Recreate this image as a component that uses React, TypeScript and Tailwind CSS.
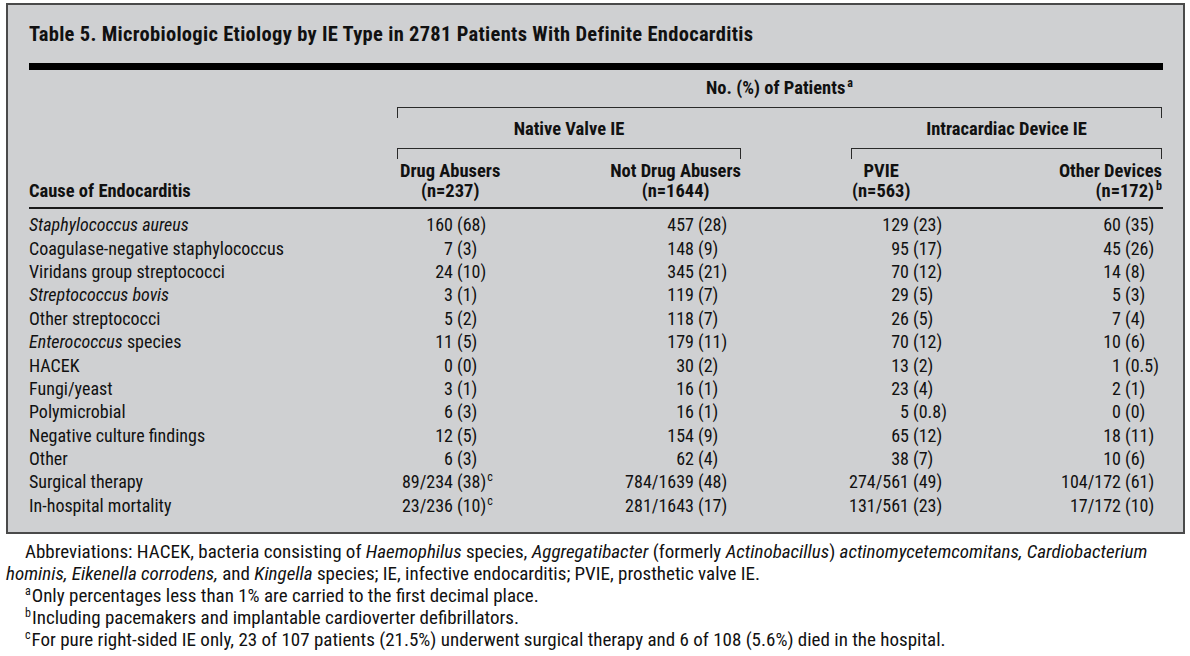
import type { ReactNode } from "react";

type Row = {
  label: ReactNode;
  cells: string[];
  sup?: boolean;
};

const rows: Row[] = [
  { label: <i>Staphylococcus aureus</i>, cells: ["160 (68)", "457 (28)", "129 (23)", "60 (35)"] },
  { label: "Coagulase-negative staphylococcus", cells: ["7 (3)", "148 (9)", "95 (17)", "45 (26)"] },
  { label: "Viridans group streptococci", cells: ["24 (10)", "345 (21)", "70 (12)", "14 (8)"] },
  { label: <i>Streptococcus bovis</i>, cells: ["3 (1)", "119 (7)", "29 (5)", "5 (3)"] },
  { label: "Other streptococci", cells: ["5 (2)", "118 (7)", "26 (5)", "7 (4)"] },
  {
    label: (
      <>
        <i>Enterococcus</i> species
      </>
    ),
    cells: ["11 (5)", "179 (11)", "70 (12)", "10 (6)"],
  },
  { label: "HACEK", cells: ["0 (0)", "30 (2)", "13 (2)", "1 (0.5)"] },
  { label: "Fungi/yeast", cells: ["3 (1)", "16 (1)", "23 (4)", "2 (1)"] },
  { label: "Polymicrobial", cells: ["6 (3)", "16 (1)", "5 (0.8)", "0 (0)"] },
  { label: "Negative culture findings", cells: ["12 (5)", "154 (9)", "65 (12)", "18 (11)"] },
  { label: "Other", cells: ["6 (3)", "62 (4)", "38 (7)", "10 (6)"] },
  { label: "Surgical therapy", cells: ["89/234 (38)", "784/1639 (48)", "274/561 (49)", "104/172 (61)"], sup: true },
  { label: "In-hospital mortality", cells: ["23/236 (10)", "281/1643 (17)", "131/561 (23)", "17/172 (10)"], sup: true },
];

// where the number part ends inside each column (keeps the "(" lined up)
const numWidths = ["w-[56px]", "w-[125px]", "w-[58px]", "w-[115px]"];
const colStarts = ["col-start-2", "col-start-3", "col-start-5", "col-start-6"];

function Cell({ value, numW, col, sup }: { value: string; numW: string; col: string; sup?: boolean }) {
  const [num, pct] = value.split(" ");
  return (
    <div className={`${col} flex whitespace-nowrap`}>
      <span className={`${numW} shrink-0 flex justify-end`}>
        <span>{num}</span>
      </span>
      <span className="pl-[4px]">
        {pct}
        {sup && <sup className="ml-[1px] text-[12px] -top-[7px]">c</sup>}
      </span>
    </div>
  );
}

function Bracket() {
  return <div className="h-[11px] border-t-[1.5px] border-x-[1.5px] border-[#2a2a2a]" />;
}

export default function App() {
  return (
    <div className="w-[1190px] h-[656px] bg-white text-[#111] font-['Roboto',sans-serif] font-stretch-75% overflow-hidden">
      <div className="ml-[6px] mt-[3px] w-[1179px] bg-[#cfd0d2] border-2 border-[#4a4a4a] pl-[21px] pb-[14px]">
        <h1 className="pt-[18px] text-[20.5px] leading-[22px] tracking-[0.3px] font-bold">
          Table 5. Microbiologic Etiology by IE Type in 2781 Patients With Definite Endocarditis
        </h1>
        <div className="mt-[18px] h-[7px] w-[1134px] bg-black" />

        <div className="w-[1134px] grid grid-cols-[368px_172px_172px_110px_155px_156px] text-[18.5px] leading-[20px]">
          {/* spanner */}
          <div className="col-start-2 col-span-5 mt-[8px] text-center font-bold">
            No. (%) of Patients<sup className="ml-[2px] text-[12px] -top-[7px]">a</sup>
          </div>
          <div className="col-start-2 col-span-5 mt-[9px]">
            <Bracket />
          </div>
          <div className="col-start-2 col-span-2 mt-[1px] text-center font-bold">Native Valve IE</div>
          <div className="col-start-5 col-span-2 mt-[1px] text-center font-bold">Intracardiac Device IE</div>
          <div className="col-start-2 col-span-2 mt-[9px]">
            <Bracket />
          </div>
          <div className="col-start-5 col-span-2 mt-[9px]">
            <Bracket />
          </div>

          {/* column headers */}
          <div className="col-start-1 self-end mt-[2px] pb-[6px] font-bold">Cause of Endocarditis</div>
          <div className="col-start-2 mt-[2px] pl-[3px] pb-[6px] font-bold">
            <div className="inline-block text-center">
              Drug Abusers
              <br />
              (n=237)
            </div>
          </div>
          <div className="col-start-3 mt-[2px] pb-[6px] text-right font-bold">
            <div className="inline-block text-center">
              Not Drug Abusers
              <br />
              (n=1644)
            </div>
          </div>
          <div className="col-start-5 mt-[2px] pl-[1px] pb-[6px] font-bold">
            <div className="inline-block text-center">
              PVIE
              <br />
              (n=563)
            </div>
          </div>
          <div className="col-start-6 mt-[2px] pb-[6px] text-right font-bold">
            Other Devices
            <br />
            (n=172)<sup className="ml-[2px] text-[12px] -top-[7px]">b</sup>
          </div>
        </div>
        <div className="h-[1.5px] w-[1134px] bg-[#1a1a1a]" />

        <div className="mt-[5px] w-[1134px] grid grid-cols-[368px_172px_172px_110px_155px_156px] auto-rows-[23.4px] items-center text-[18px] leading-[20px]">
          {rows.map((row, i) => (
            <div key={i} className="contents">
              <div className="col-start-1 whitespace-nowrap">{row.label}</div>
              {row.cells.map((c, j) => (
                <Cell key={j} value={c} numW={numWidths[j]} col={colStarts[j]} sup={row.sup && j === 0} />
              ))}
            </div>
          ))}
        </div>
      </div>

      <div className="mt-[7px] ml-[6px] text-[19px] leading-[22px] whitespace-nowrap">
        <p className="pl-[19px]">
          Abbreviations: HACEK, bacteria consisting of <i>Haemophilus</i> species, <i>Aggregatibacter</i> (formerly{" "}
          <i>Actinobacillus</i>) <i>actinomycetemcomitans, Cardiobacterium</i>
        </p>
        <p>
          <i>hominis, Eikenella corrodens,</i> and <i>Kingella</i> species; IE, infective endocarditis; PVIE, prosthetic valve IE.
        </p>
        <p className="pl-[19px]">
          <sup className="text-[12px] -top-[7px] mr-[1px]">a</sup>Only percentages less than 1% are carried to the first decimal place.
        </p>
        <p className="pl-[19px]">
          <sup className="text-[12px] -top-[7px] mr-[1px]">b</sup>Including pacemakers and implantable cardioverter defibrillators.
        </p>
        <p className="pl-[19px]">
          <sup className="text-[12px] -top-[7px] mr-[1px]">c</sup>For pure right-sided IE only, 23 of 107 patients (21.5%) underwent
          surgical therapy and 6 of 108 (5.6%) died in the hospital.
        </p>
      </div>
    </div>
  );
}
